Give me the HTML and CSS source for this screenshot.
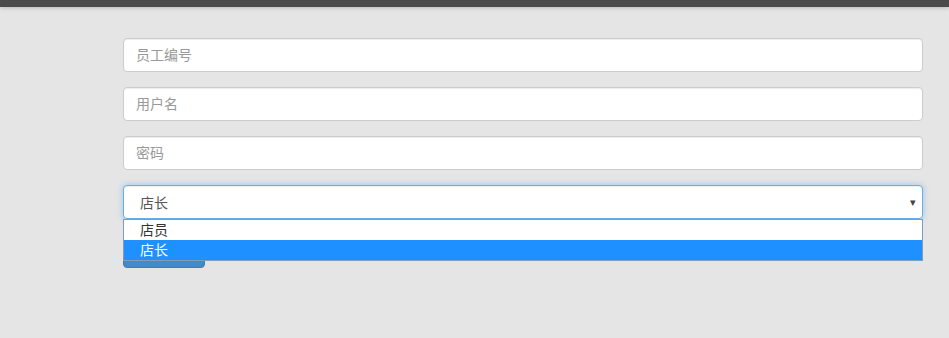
FILE: index.html
```html
<!DOCTYPE html>
<html lang="zh-CN">
<head>
  <meta charset="UTF-8">
  <meta name="viewport" content="width=device-width, initial-scale=1.0">
  <title>添加员工</title>
  <link rel="stylesheet" href="styles.css">
</head>
<body>
  <div class="topbar"></div>
  <form class="form">
    <input type="text" class="form-control" placeholder="员工编号">
    <input type="text" class="form-control" placeholder="用户名">
    <input type="password" class="form-control" placeholder="密码">
    <div class="select-wrap">
      <div class="form-control select-box">
        <span>店长</span>
        <span class="caret">&#9662;</span>
      </div>
      <ul class="dropdown">
        <li>店员</li>
        <li class="selected">店长</li>
      </ul>
    </div>
    <!-- button label is hidden behind the open dropdown -->
    <button type="button" class="btn" aria-label="提交"></button>
  </form>
</body>
</html>
```

FILE: styles.css
```css
body {
  margin: 0;
  background: #e5e5e5;
  font-family: "Liberation Sans", "Noto Sans CJK SC", sans-serif;
  font-size: 14px;
  color: #555;
}
.topbar {
  height: 7px;
  background: #4a4a4a;
  box-shadow: 0 1px 4px rgba(0,0,0,0.2);
}
.form {
  width: 800px;
  margin-left: 123px;
  padding-top: 31px;
  display: flex;
  flex-direction: column;
  gap: 15px;
}
.form-control {
  box-sizing: border-box;
  height: 34px;
  width: 100%;
  margin: 0;
  padding: 6px 12px;
  font: inherit;
  color: #555;
  background: #fff;
  border: 1px solid #ccc;
  border-radius: 4px;
  box-shadow: inset 0 1px 1px rgba(0,0,0,0.075);
  outline: none;
}
.form-control::placeholder {
  color: #999;
}
.select-wrap {
  position: relative;
}
.select-box {
  display: flex;
  align-items: center;
  justify-content: space-between;
  padding-left: 16px;
  padding-right: 6px;
  border-color: #66afe9;
  box-shadow: inset 0 1px 1px rgba(0,0,0,0.075), 0 0 6px rgba(102,175,233,0.6);
}
.caret {
  font-size: 11px;
  color: #444;
}
.dropdown {
  position: absolute;
  top: 34px;
  left: 0;
  right: 0;
  margin: 0;
  padding: 0;
  list-style: none;
  background: #fff;
  border: 1px solid #7f9db9;
  z-index: 2;
}
.dropdown li {
  height: 20px;
  line-height: 20px;
  padding-left: 16px;
  color: #333;
}
.dropdown li.selected {
  background: #1e90ff;
  color: #fff;
}
.btn {
  width: 82px;
  height: 34px;
  color: #fff;
  background: #428bca;
  border: 1px solid #357ebd;
  border-radius: 4px;
  font: inherit;
}
```
